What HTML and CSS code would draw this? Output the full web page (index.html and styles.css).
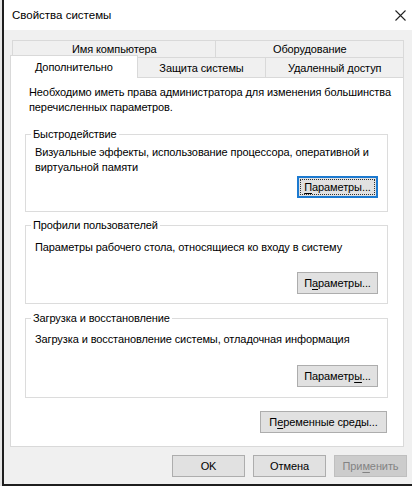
FILE: index.html
```html
<!DOCTYPE html>
<html lang="ru">
<head>
<meta charset="utf-8">
<title>Свойства системы</title>
<link rel="stylesheet" href="styles.css">
</head>
<body>
<div class="window">
  <div class="titlebar">
    <span class="title">Свойства системы</span>
    <svg class="close" width="11" height="11" viewBox="0 0 11 11"><path d="M0.5 0.5L10.5 10.5M10.5 0.5L0.5 10.5" stroke="#222" stroke-width="1.1" fill="none"/></svg>
  </div>
  <div class="client">
    <div class="tabs">
      <div class="tabrow back">
        <div class="tab w-name">Имя компьютера</div>
        <div class="tab w-hw">Оборудование</div>
      </div>
      <div class="tabrow front">
        <div class="tab selected w-adv">Дополнительно</div>
        <div class="tab w-prot">Защита системы</div>
        <div class="tab w-remote">Удаленный доступ</div>
      </div>
    </div>
    <div class="panel">
      <p class="intro">Необходимо иметь права администратора для изменения большинства<br>перечисленных параметров.</p>
      <fieldset class="group g1">
        <legend>Быстродействие</legend>
        <p class="desc">Визуальные эффекты, использование процессора, оперативной и<br>виртуальной памяти</p>
        <div class="actions"><button class="btn focused"><span class="focusring"><u>П</u>араметры...</span></button></div>
      </fieldset>
      <fieldset class="group g2">
        <legend>Профили пользователей</legend>
        <p class="desc">Параметры рабочего стола, относящиеся ко входу в систему</p>
        <div class="actions"><button class="btn">П<u>а</u>раметры...</button></div>
      </fieldset>
      <fieldset class="group g3">
        <legend>Загрузка и восстановление</legend>
        <p class="desc">Загрузка и восстановление системы, отладочная информация</p>
        <div class="actions"><button class="btn">Параметр<u>ы</u>...</button></div>
      </fieldset>
      <div class="actions env"><button class="btn wide">П<u>е</u>ременные среды...</button></div>
    </div>
    <div class="footer">
      <button class="btn">OK</button>
      <button class="btn">Отмена</button>
      <button class="btn disabled">При<u>м</u>енить</button>
    </div>
  </div>
</div>
</body>
</html>
```
FILE: styles.css
```css
* { box-sizing: border-box; }
html, body { margin: 0; padding: 0; }
body {
  width: 412px;
  height: 486px;
  overflow: hidden;
  background: #e6e6e6;
  font-family: "Liberation Sans", Arial, sans-serif;
  font-size: 11px;
  letter-spacing: -0.1px;
  color: #000;
}
.window {
  margin-left: 2px;
  width: 410px;
  height: 486px;
  border-left: 2px solid #1e1e1e;
  border-bottom: 2px solid #1e1e1e;
  background: #f0f0f0;
  display: flex;
  flex-direction: column;
}
.titlebar {
  height: 30px;
  flex: none;
  background: #fff;
  display: flex;
  align-items: center;
  justify-content: space-between;
  padding: 0 6px 0 8px;
}
.title { font-size: 11.5px; letter-spacing: 0; color: #000; }
.close { display: block; }
.client { flex: 1; padding-top: 10px; }
.tabs { margin-left: 8px; width: 392px; }
.tabrow { display: flex; align-items: flex-start; }
.tab {
  display: flex;
  align-items: center;
  justify-content: center;
  background: #f0f0f0;
  border: 1px solid #d9d9d9;
  white-space: nowrap;
}
.tabrow .tab + .tab { margin-left: -1px; }
.back .tab { height: 18px; }
.front { margin-top: -1px; }
.front .tab { height: 20px; border-bottom: none; padding-top: 1px; }
.w-name { width: 205px; }
.w-hw { width: 189px; }
.tab.selected {
  position: relative;
  z-index: 1;
  background: #fff;
  margin-left: -2px;
  margin-top: -2px;
  margin-bottom: -1px;
  height: 23px;
  padding-top: 0;
  padding-bottom: 1px;
}
.w-adv { width: 128px; }
.w-prot { width: 130px; }
.w-remote { width: 139px; }

.panel {
  margin-left: 6px;
  width: 394px;
  height: 370px;
  background: #fff;
  border: 1px solid #d9d9d9;
  padding: 7px 15px 0 14px;
}
p { margin: 0; line-height: 15px; white-space: nowrap; }
.intro { margin: 0 0 12px 4px; }
.group {
  margin: 0;
  padding: 0 9px 13px;
  border: 1px solid #dcdcdc;
  min-width: 0;
}
.group legend {
  padding: 0 2px;
  margin-left: -4px;
  line-height: 15px;
}
.g1 .desc { margin-top: 3px; }
.g1 .actions { margin-top: 1px; }
.g2 { margin-top: 6px; padding-bottom: 9px; }
.g2 .desc { margin-top: 7px; }
.g2 .actions { margin-top: 17px; }
.g3 { margin-top: 7px; padding-bottom: 10px; }
.g3 .desc { margin-top: 6px; }
.g3 .actions { margin-top: 18px; }
.actions { display: flex; justify-content: flex-end; }
.env { margin-top: 13px; padding-right: 1px; }

.btn {
  width: 81px;
  height: 22px;
  padding: 0;
  margin: 0;
  flex: none;
  font-family: inherit;
  font-size: 11px;
  letter-spacing: -0.1px;
  color: #000;
  background: #e1e1e1;
  border: 1px solid #adadad;
  display: flex;
  align-items: center;
  justify-content: center;
  white-space: nowrap;
}
.btn u { text-underline-offset: 2px; }
.btn.focused {
  border: 2px solid #1c7ad0;
  padding: 1px;
}
.focusring {
  flex: 1;
  align-self: stretch;
  display: flex;
  align-items: center;
  justify-content: center;
  border: 1px dotted #333;
}
.btn.wide { width: 127px; }

.footer {
  display: flex;
  justify-content: flex-end;
  gap: 8px;
  padding: 8px 5px 0 0;
}
.footer .btn { width: 73px; }
.btn.disabled {
  background: #cccccc;
  border-color: #bfbfbf;
  color: #838383;
}
```
